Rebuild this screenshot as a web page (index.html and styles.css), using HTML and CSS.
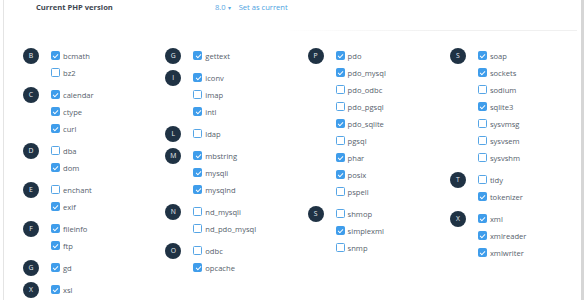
FILE: index.html
```html
<!DOCTYPE html>
<html lang="en">
<head>
  <meta charset="UTF-8" />
  <meta name="viewport" content="width=device-width, initial-scale=1.0"/>
  <link rel="stylesheet" href="styles.css">
</head>
<body>

  <div class="panel">
    <div class="version-row">
      <span class="version-label">Current PHP version</span>
      <span class="version-pick">8.0 <span class="caret">&#9662;</span></span>
      <a class="set-current">Set as current</a>
    </div>

    <div class="divider"></div>

    <div class="extensions">

      <div class="col">
        <div class="group">
          <span class="letter">B</span>
          <div class="opts">
            <label class="opt"><span class="box on"></span>bcmath</label>
            <label class="opt"><span class="box"></span>bz2</label>
          </div>
        </div>
        <div class="group">
          <span class="letter">C</span>
          <div class="opts">
            <label class="opt"><span class="box on"></span>calendar</label>
            <label class="opt"><span class="box on"></span>ctype</label>
            <label class="opt"><span class="box on"></span>curl</label>
          </div>
        </div>
        <div class="group">
          <span class="letter">D</span>
          <div class="opts">
            <label class="opt"><span class="box"></span>dba</label>
            <label class="opt"><span class="box on"></span>dom</label>
          </div>
        </div>
        <div class="group">
          <span class="letter">E</span>
          <div class="opts">
            <label class="opt"><span class="box"></span>enchant</label>
            <label class="opt"><span class="box on"></span>exif</label>
          </div>
        </div>
        <div class="group">
          <span class="letter">F</span>
          <div class="opts">
            <label class="opt"><span class="box on"></span>fileinfo</label>
            <label class="opt"><span class="box on"></span>ftp</label>
          </div>
        </div>
        <div class="group">
          <span class="letter">G</span>
          <div class="opts">
            <label class="opt"><span class="box on"></span>gd</label>
          </div>
        </div>
        <div class="group">
          <span class="letter">X</span>
          <div class="opts">
            <label class="opt"><span class="box on"></span>xsl</label>
          </div>
        </div>
      </div>

      <div class="col">
        <div class="group">
          <span class="letter">G</span>
          <div class="opts">
            <label class="opt"><span class="box on"></span>gettext</label>
          </div>
        </div>
        <div class="group">
          <span class="letter">I</span>
          <div class="opts">
            <label class="opt"><span class="box on"></span>iconv</label>
            <label class="opt"><span class="box"></span>imap</label>
            <label class="opt"><span class="box on"></span>intl</label>
          </div>
        </div>
        <div class="group">
          <span class="letter">L</span>
          <div class="opts">
            <label class="opt"><span class="box"></span>ldap</label>
          </div>
        </div>
        <div class="group">
          <span class="letter">M</span>
          <div class="opts">
            <label class="opt"><span class="box on"></span>mbstring</label>
            <label class="opt"><span class="box on"></span>mysqli</label>
            <label class="opt"><span class="box on"></span>mysqlnd</label>
          </div>
        </div>
        <div class="group">
          <span class="letter">N</span>
          <div class="opts">
            <label class="opt"><span class="box"></span>nd_mysqli</label>
            <label class="opt"><span class="box"></span>nd_pdo_mysql</label>
          </div>
        </div>
        <div class="group">
          <span class="letter">O</span>
          <div class="opts">
            <label class="opt"><span class="box"></span>odbc</label>
            <label class="opt"><span class="box on"></span>opcache</label>
          </div>
        </div>
      </div>

      <div class="col">
        <div class="group">
          <span class="letter">P</span>
          <div class="opts">
            <label class="opt"><span class="box on"></span>pdo</label>
            <label class="opt"><span class="box on"></span>pdo_mysql</label>
            <label class="opt"><span class="box"></span>pdo_odbc</label>
            <label class="opt"><span class="box"></span>pdo_pgsql</label>
            <label class="opt"><span class="box on"></span>pdo_sqlite</label>
            <label class="opt"><span class="box"></span>pgsql</label>
            <label class="opt"><span class="box on"></span>phar</label>
            <label class="opt"><span class="box on"></span>posix</label>
            <label class="opt"><span class="box"></span>pspell</label>
          </div>
        </div>
        <div class="group">
          <span class="letter">S</span>
          <div class="opts">
            <label class="opt"><span class="box"></span>shmop</label>
            <label class="opt"><span class="box on"></span>simplexml</label>
            <label class="opt"><span class="box"></span>snmp</label>
          </div>
        </div>
      </div>

      <div class="col">
        <div class="group">
          <span class="letter">S</span>
          <div class="opts">
            <label class="opt"><span class="box on"></span>soap</label>
            <label class="opt"><span class="box on"></span>sockets</label>
            <label class="opt"><span class="box"></span>sodium</label>
            <label class="opt"><span class="box on"></span>sqlite3</label>
            <label class="opt"><span class="box"></span>sysvmsg</label>
            <label class="opt"><span class="box"></span>sysvsem</label>
            <label class="opt"><span class="box"></span>sysvshm</label>
          </div>
        </div>
        <div class="group">
          <span class="letter">T</span>
          <div class="opts">
            <label class="opt"><span class="box"></span>tidy</label>
            <label class="opt"><span class="box on"></span>tokenizer</label>
          </div>
        </div>
        <div class="group">
          <span class="letter">X</span>
          <div class="opts">
            <label class="opt"><span class="box on"></span>xml</label>
            <label class="opt"><span class="box on"></span>xmlreader</label>
            <label class="opt"><span class="box on"></span>xmlwriter</label>
          </div>
        </div>
      </div>

    </div>
  </div>

</body>
</html>
```

FILE: styles.css
```css
* {
  margin: 0;
  padding: 0;
  box-sizing: border-box;
}

html, body {
  width: 100%;
  height: 100%;
  overflow: hidden;
  background: #fff;
  font-family: "Open Sans", Arial, sans-serif;
}

.panel {
  margin-left: 3px;
  width: 581px;
  height: 300px;
  border-left: 1px solid #e4e4e4;
  border-right: 3px solid #d6d6d6;
}

.version-row {
  display: flex;
  align-items: center;
  height: 13px;
  padding-left: 32px;
  font-size: 7.6px;
}

.version-label {
  width: 179px;
  font-weight: 700;
  color: #3d4650;
}

.version-pick {
  color: #5aa7e2;
  margin-right: 8px;
}

.caret {
  font-size: 6px;
}

.set-current {
  color: #4c9fe0;
  cursor: pointer;
}

.divider {
  height: 1px;
  margin: 17px 4px 0 36px;
  background: linear-gradient(to right, rgba(240,240,240,0) 45%, #f0f0f0 75%);
}

.extensions {
  display: grid;
  grid-template-columns: repeat(4, 142.3px);
  padding: 16px 0 0 19px;
}

.group {
  display: flex;
  margin-bottom: 5px;
}

.letter {
  flex: none;
  width: 16px;
  height: 16px;
  margin: 0.5px 12px 0 0;
  border-radius: 50%;
  background: #1f3244;
  color: #e8edf2;
  font-size: 6.8px;
  font-weight: 400;
  display: flex;
  align-items: center;
  justify-content: center;
}

.opt {
  display: flex;
  align-items: center;
  height: 17px;
  font-size: 7.6px;
  color: #56616c;
}

.box {
  position: relative;
  width: 9px;
  height: 9px;
  margin-right: 3px;
  border: 1px solid #55a5e6;
  border-radius: 1.5px;
  background: #fff;
}

.box.on {
  background: #3f9deb;
  border-color: #3f9deb;
}

.box.on::after {
  content: "";
  position: absolute;
  left: 2.4px;
  top: 0.6px;
  width: 2px;
  height: 4.2px;
  border-right: 1px solid #fff;
  border-bottom: 1px solid #fff;
  transform: rotate(45deg);
}
```
